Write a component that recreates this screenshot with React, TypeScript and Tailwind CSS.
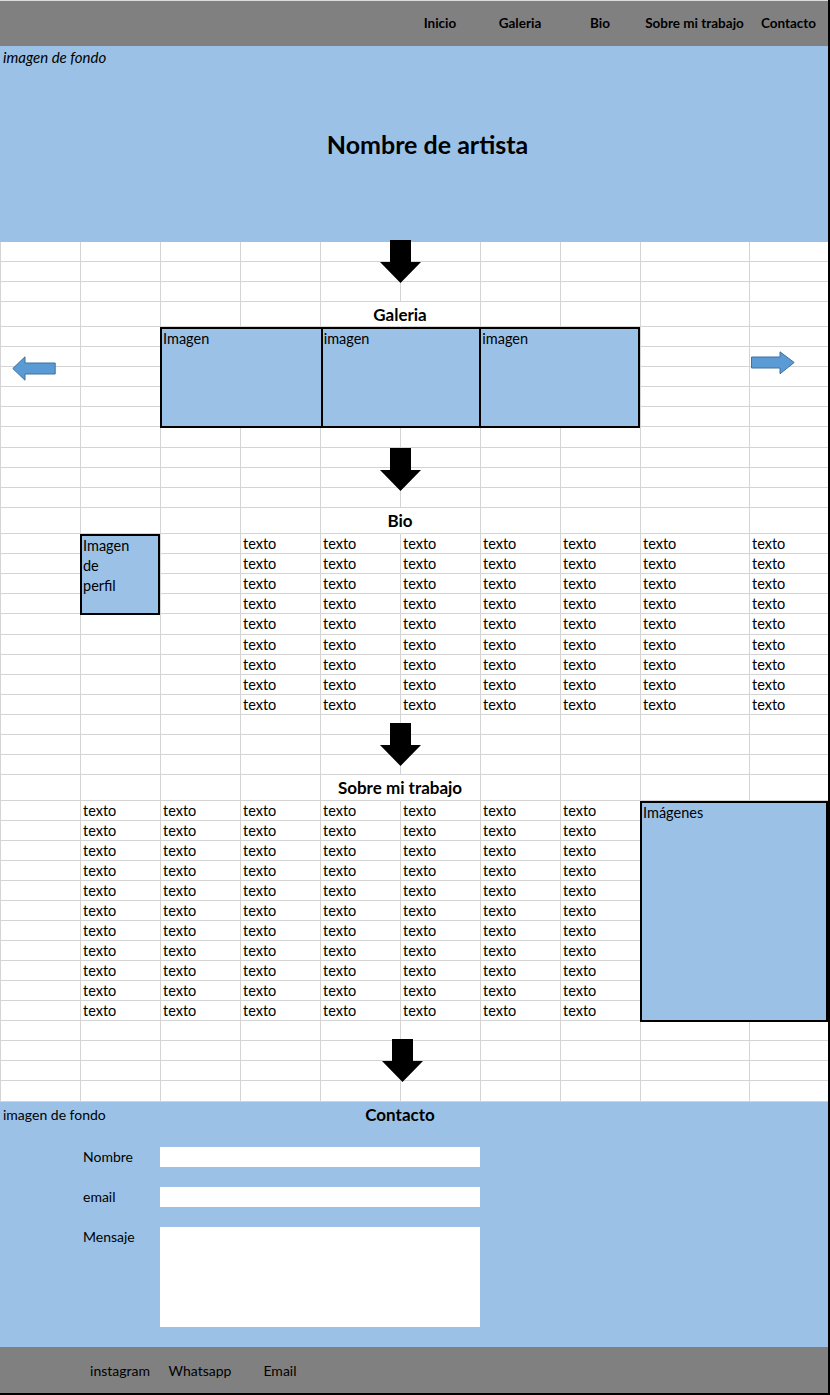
import React from "react";

const ROW_COUNT = 42;
const TITLE_ROWS = [4, 14, 27];

function DownArrow() {
  return (
    <svg width="41" height="43" viewBox="0 0 41 43" className="block">
      <path d="M10 0 H31 V22 H41 L20.5 43 L0 22 H10 Z" fill="#000" />
    </svg>
  );
}

function LeftArrow() {
  return (
    <svg width="44" height="26" viewBox="0 0 44 26" className="block">
      <path
        d="M0.8 12.5 L13 0.8 V7 H43.2 V18 H13 V24.2 Z"
        fill="#5b9bd5"
        stroke="#41719c"
        strokeWidth="1"
      />
    </svg>
  );
}

function RightArrow() {
  return (
    <svg width="44" height="24" viewBox="0 0 44 24" className="block">
      <path
        d="M0.5 6 H29 V0.8 L43.2 11.5 L29 22.8 V17 H0.5 Z"
        fill="#5b9bd5"
        stroke="#41719c"
        strokeWidth="1"
      />
    </svg>
  );
}

function cellText(r: number, c: number): string {
  if (r >= 15 && r <= 23 && c >= 4) return "texto";
  if (r >= 28 && r <= 38 && c >= 2 && c <= 8) return "texto";
  return "";
}

export default function App() {
  const cells: React.ReactNode[] = [];
  for (let r = 1; r <= ROW_COUNT; r++) {
    for (let c = 1; c <= 10; c++) {
      const hide = TITLE_ROWS.includes(r) && c === 6;
      const txt = cellText(r, c);
      cells.push(
        <div
          key={`${r}-${c}`}
          style={{ gridRow: r, gridColumn: c }}
          className={`flex items-center border-b border-l border-[#d4d4d4] pl-[2px] ${
            hide ? "border-l-transparent" : ""
          }`}
        >
          {txt}
        </div>
      );
    }
  }

  return (
    <div className="w-[830px] border-b-2 border-r-2 border-black font-['Lato','Open_Sans',sans-serif] text-black">
      {/* Top nav */}
      <div className="grid h-[46px] grid-cols-[80px_80px_80px_80px_80px_80px_80px_80px_109px_79px] border-t border-[#dcdcdc] bg-[#808080] text-[13.5px] font-bold">
        <div className="col-start-6 flex items-center justify-center">Inicio</div>
        <div className="col-start-7 flex items-center justify-center">Galeria</div>
        <div className="col-start-8 flex items-center justify-center">Bio</div>
        <div className="col-start-9 flex items-center justify-center">Sobre mi trabajo</div>
        <div className="col-start-10 flex items-center justify-center">Contacto</div>
      </div>

      {/* Hero */}
      <div className="flex h-[196px] flex-col bg-[#9bc2e6]">
        <div className="h-[22px] pl-[3px] text-[15px] italic leading-[22px]">imagen de fondo</div>
        <div className="flex flex-1 items-center justify-center pb-[20px] pl-[27px] text-[25px] font-bold">
          Nombre de artista
        </div>
      </div>

      {/* Spreadsheet area */}
      <div className="grid grid-cols-[80px_80px_80px_80px_80px_80px_80px_80px_109px_79px] grid-rows-[20px_20px_20px_25px_20px_20px_20px_20px_20px_21px_20px_20px_20px_26px_20px_20px_20px_20px_21px_20px_20px_20px_20px_20px_20px_20px_26px_20px_20px_20px_20px_20px_20px_20px_20px_20px_20px_20px_20px_20px_20px_21px] text-[14.5px] leading-[20px]">
        {cells}

        {/* Arrows */}
        <div className="col-start-5 col-span-2 row-start-1 row-span-3 flex items-start justify-center">
          <div className="-mt-[2px]">
            <DownArrow />
          </div>
        </div>
        <div className="col-start-5 col-span-2 row-start-11 row-span-3 flex items-start justify-center">
          <DownArrow />
        </div>
        <div className="col-start-5 col-span-2 row-start-24 row-span-3 flex items-start justify-center pt-[8px]">
          <DownArrow />
        </div>
        <div className="col-start-5 col-span-2 row-start-39 row-span-4 flex items-start justify-center pl-[4px] pt-[18px]">
          <DownArrow />
        </div>

        <div className="col-start-1 row-start-6 row-span-3 flex items-start pl-[12px] pt-[9px]">
          <LeftArrow />
        </div>
        <div className="col-start-10 row-start-6 row-span-2 flex items-start pl-[2px] pt-[4px]">
          <RightArrow />
        </div>

        {/* Titles */}
        <div className="col-start-4 col-span-4 row-start-4 flex items-center justify-center text-[17px] font-bold">
          Galeria
        </div>
        <div className="col-start-4 col-span-4 row-start-14 flex items-center justify-center text-[17px] font-bold">
          Bio
        </div>
        <div className="col-start-4 col-span-4 row-start-27 flex items-center justify-center text-[17px] font-bold">
          Sobre mi trabajo
        </div>

        {/* Gallery boxes */}
        <div className="col-start-3 col-span-6 row-start-5 row-span-5 -mb-px grid grid-cols-3 border-2 border-black bg-[#9bc2e6]">
          <div className="pl-[1px]">Imagen</div>
          <div className="border-l-2 border-black pl-[1px]">imagen</div>
          <div className="border-l-2 border-black pl-[1px]">imagen</div>
        </div>

        {/* Profile image */}
        <div className="col-start-2 row-start-15 row-span-4 -mb-px flex flex-col border-2 border-black bg-[#9bc2e6] pl-[1px]">
          <div>Imagen</div>
          <div>de</div>
          <div>perfil</div>
        </div>

        {/* Work images */}
        <div className="col-start-9 col-span-2 row-start-28 row-span-11 -mb-px border-2 border-black bg-[#9bc2e6] pl-[1px]">
          Imágenes
        </div>
      </div>

      {/* Contact */}
      <div className="grid grid-cols-[80px_80px_80px_80px_80px_80px_80px_80px_109px_79px] grid-rows-[25px_20px_20px_20px_20px_20px_100px_20px] bg-[#9bc2e6] text-[14px] leading-[20px]">
        <div className="col-start-1 col-span-3 row-start-1 flex items-center pl-[3px]">imagen de fondo</div>
        <div className="col-start-4 col-span-4 row-start-1 flex items-center justify-center text-[17px] font-bold">
          Contacto
        </div>
        <div className="col-start-2 row-start-3 flex items-center pl-[3px]">Nombre</div>
        <div className="col-start-3 col-span-4 row-start-3 bg-white" />
        <div className="col-start-2 row-start-5 flex items-center pl-[3px]">email</div>
        <div className="col-start-3 col-span-4 row-start-5 bg-white" />
        <div className="col-start-2 row-start-7 h-[20px] pl-[3px]">Mensaje</div>
        <div className="col-start-3 col-span-4 row-start-7 bg-white" />
      </div>

      {/* Footer */}
      <div className="grid h-[46px] grid-cols-[80px_80px_80px_80px_80px_80px_80px_80px_109px_79px] bg-[#808080] text-[14px]">
        <div className="col-start-2 flex items-center justify-center">instagram</div>
        <div className="col-start-3 flex items-center justify-center">Whatsapp</div>
        <div className="col-start-4 flex items-center justify-center">Email</div>
      </div>
    </div>
  );
}
